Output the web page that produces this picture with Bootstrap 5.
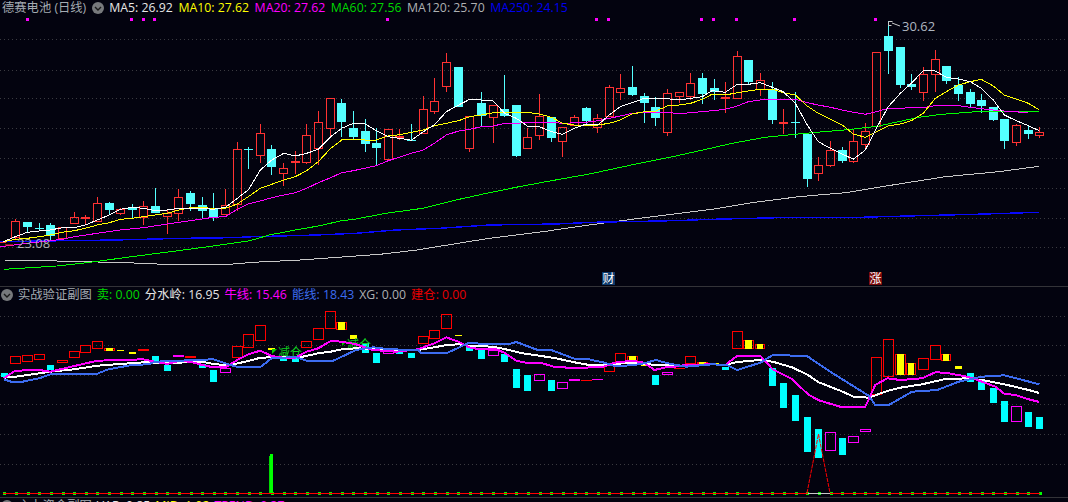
<!DOCTYPE html>
<html lang="zh-CN">
<head>
<meta charset="utf-8">
<title>德赛电池 (日线)</title>
<link href="https://cdn.jsdelivr.net/npm/bootstrap@5.3.0/dist/css/bootstrap.min.css" rel="stylesheet">
<style>
html,body{height:502px;overflow:hidden;background:#03030f}
.chart-shell{width:1068px;height:502px;background:#03030f;font-family:"Open Sans","Noto Sans CJK SC",sans-serif;font-size:12.3px;line-height:16px}
.legend-row{height:16px;gap:5.5px;white-space:nowrap;padding-left:2px;flex:none}
.legend-sub{padding-left:1px;gap:5px}
.legend-row svg{flex:none}
.pane-rule{height:1px;background:#333338;flex:none}
.chart-svg{display:block;flex:none}
.tone-title{color:#a4abb2}.tone-white{color:#e6e6e6}.tone-yellow{color:#ffff00}.tone-pink{color:#ff00ff}
.tone-green{color:#00d800}.tone-gray{color:#aeb0b2}.tone-blue{color:#0000f0}.tone-sky{color:#3c6cf0}.tone-red{color:#e80000}
.svg-label{font-family:"Open Sans","Noto Sans CJK SC",sans-serif}
</style>
</head>
<body class="m-0">
<div class="chart-shell d-flex flex-column">
  <div class="legend-row d-flex align-items-center position-relative">
    <span class="tone-title">德赛电池 (日线)</span>
    <svg width="12" height="12" viewBox="0 0 12 12"><circle cx="6" cy="6" r="6" fill="#77797c"/><path d="M3 5l3 3 3-3" fill="none" stroke="#1a1a1a" stroke-width="1.4"/></svg>
    <span class="tone-white">MA5: 26.92</span>
    <span class="tone-yellow">MA10: 27.62</span>
    <span class="tone-pink">MA20: 27.62</span>
    <span class="tone-green">MA60: 27.56</span>
    <span class="tone-gray">MA120: 25.70</span>
    <span class="tone-blue">MA250: 24.15</span>
  </div>
  <svg id="mainChart" class="chart-svg" width="1068" height="270" viewBox="0 16 1068 270"></svg>
  <div class="pane-rule"></div>
  <div class="legend-row legend-sub d-flex align-items-center">
    <svg width="12" height="12" viewBox="0 0 12 12"><circle cx="6" cy="6" r="6" fill="#77797c"/><path d="M3 5l3 3 3-3" fill="none" stroke="#1a1a1a" stroke-width="1.4"/></svg>
    <span class="tone-title">实战验证副图</span>
    <span class="tone-green">卖: 0.00</span>
    <span class="tone-white">分水岭: 16.95</span>
    <span class="tone-pink">牛线: 15.46</span>
    <span class="tone-sky">能线: 18.43</span>
    <span class="tone-gray">XG: 0.00</span>
    <span class="tone-red">建仓: 0.00</span>
  </div>
  <svg id="subChart" class="chart-svg" width="1068" height="194" viewBox="0 303 1068 194"></svg>
  <div class="pane-rule"></div>
  <div class="legend-row legend-sub d-flex align-items-center">
    <svg width="12" height="12" viewBox="0 0 12 12"><circle cx="6" cy="6" r="6" fill="#77797c"/></svg>
    <span class="tone-title">主力资金副图</span>
    <span class="tone-white">VAR: 0.85</span>
    <span class="tone-yellow">MID: 1.02</span>
    <span class="tone-pink">TREND: 0.37</span>
  </div>
</div>
<script>
var CY='#54ffff',RD='#ff3232';
// [cx, top, bottom, high, low, kind]  kind: r=hollow red, c=solid cyan
var K=[[15.5,221,237,219,239,'r'],[27.5,222,227,222,232,'c'],[39.5,228,228,223,231,'c'],[50.5,225,236,223,240,'c'],[62.5,227,238,227,240,'r'],[74.5,217,223,212,223,'r'],[85.5,217,219,215,224,'R'],[97.5,203,221,197,222,'r'],[109.5,203,210,202,215,'c'],[120.5,209,213,208,215,'r'],[132.5,207,210,204,218,'c'],[143.5,206,217,201,225,'r'],[155.5,206,213,188,213,'c'],[167.5,213,216,209,234,'r'],[178.5,197,213,189,221,'r'],[190.5,193,204,191,211,'c'],[202.5,205,211,197,218,'c'],[213.5,209,217,193,221,'c'],[225.5,205,214,189,215,'r'],[237.5,149,204,142,211,'r'],[248.5,149,149,147,169,'c'],[260.5,133,155,124,163,'r'],[271.5,149,167,145,175,'c'],[283.5,168,173,163,186,'r'],[295.5,161,163,151,174,'R'],[306.5,135,162,124,164,'r'],[318.5,122,148,111,165,'r'],[330.5,98,128,98,137,'r'],[341.5,103,122,99,137,'c'],[353.5,128,137,111,140,'c'],[365.5,131,144,119,152,'c'],[376.5,143,148,128,165,'c'],[388.5,129,159,129,161,'r'],[399.5,136,138,129,140,'R'],[411.5,140,140,124,141,'c'],[423.5,109,133,96,133,'r'],[434.5,101,111,78,114,'r'],[446.5,62,86,53,92,'r'],[458.5,67,107,67,107,'c'],[469.5,116,148,116,152,'r'],[481.5,103,116,92,127,'c'],[493.5,105,117,105,143,'r'],[504.5,109,116,75,117,'c'],[516.5,105,156,105,157,'c'],[527.5,137,148,128,148,'r'],[539.5,116,135,94,140,'r'],[551.5,117,138,117,142,'c'],[562.5,127,141,127,157,'r'],[574.5,117,125,115,125,'r'],[586.5,108,121,107,124,'c'],[597.5,118,127,114,133,'r'],[609.5,87,116,85,116,'r'],[620.5,88,92,74,100,'r'],[632.5,87,95,66,96,'c'],[644.5,96,103,93,123,'c'],[655.5,107,118,97,126,'c'],[667.5,93,132,89,136,'r'],[679.5,92,96,92,103,'r'],[690.5,83,96,73,100,'r'],[702.5,78,94,73,104,'c'],[714.5,88,92,79,100,'c'],[725.5,97,99,82,113,'R'],[737.5,56,98,51,99,'r'],[748.5,60,82,60,84,'c'],[760.5,80,89,73,96,'r'],[772.5,89,120,82,124,'c'],[783.5,122,124,109,134,'R'],[795.5,122,122,92,138,'c'],[807.5,134,179,134,187,'c'],[818.5,165,173,157,181,'r'],[830.5,150,165,141,167,'r'],[842.5,150,161,147,163,'c'],[853.5,141,161,130,163,'r'],[865.5,131,144,123,149,'r'],[876.5,52,126,52,126,'r'],[888.5,36,51,21,74,'c'],[900.5,47,85,47,88,'c'],[911.5,84,87,74,90,'c'],[923.5,74,92,67,101,'r'],[935.5,59,74,50,92,'r'],[946.5,66,81,66,84,'c'],[958.5,85,94,77,101,'c'],[970.5,92,104,89,107,'c'],[981.5,100,106,94,113,'c'],[993.5,107,120,107,121,'c'],[1004.5,119,141,119,149,'c'],[1016.5,125,142,124,146,'r'],[1028.5,130,134,126,139,'c'],[1039.5,132,135,127,138,'r']];
function P(ox,oy,a){var o=[];for(var i=0;i<a.length;i+=2)o.push((ox+a[i]/3).toFixed(1)+','+(oy+a[i+1]/3).toFixed(1));return o.join(' ')}
var MA={
w:[P(0,0,[10,725,46,710,82,697,118,693,151,690,187,683,223,683,256,675,292,660,328,645,361,628,397,622,430,625,466,632,502,630,536,625,571,625,607,625,640,628,676,622,712,595,745,570,781,510,815,480,851,460,886,468,920,460,955,448,992,410,1025,385,1060,370]),P(356,0,[28,372,61,392,97,410,130,415,166,421,202,395,235,375,271,335,308,315,341,298,376,300,412,303,446,340,481,355,514,378,550,380,586,395,620,403,655,385,691,372,725,375,760,345,793,320,829,308,865,295,899,296,934,296,970,300,1004,295,1039,290]),P(712,0,[0,272,40,277,76,253,109,253,145,248,181,262,214,275,250,310,286,375,319,425,355,445,391,462,424,478,460,450,493,385,529,320,565,280,598,250,634,212,670,213,703,232,739,237,775,245,808,265,844,300,877,345,913,362,949,377,982,392])].join(' '),
y:[P(0,0,[10,725,46,718,82,715,118,710,151,705,187,697,223,692,256,685,292,675,328,668,361,658,397,655,430,650,466,645,502,640,536,630,571,623,607,623,640,625,676,625,712,612,745,590,781,565,815,553,851,540,886,530,920,512,955,485,992,445,1025,420,1060,417]),P(356,0,[28,420,61,420,97,408,130,404,166,397,202,390,235,377,271,370,308,362,341,350,376,345,412,338,446,338,481,338,514,337,550,342,586,352,620,370,655,375,691,375,725,375,760,370,793,360,829,342,865,335,899,333,934,318,970,315,1004,310,1039,298]),P(712,0,[0,283,40,285,76,278,109,273,145,268,181,268,214,278,250,285,286,318,319,340,355,357,391,375,424,402,460,412,493,395,529,378,565,372,598,362,634,340,670,295,703,275,739,255,775,245,808,238,844,258,877,285,913,297,949,310,982,330])].join(' '),
m:[P(0,0,[0,740,82,730,187,718,223,710,292,700,361,690,430,683,502,672,571,662,640,652,676,650,712,628,745,612,781,603,815,593,851,585,886,578,920,565,955,548,992,533,1025,518,1060,512]),P(356,0,[61,497,97,482,166,460,202,450,235,430,271,405,308,393,341,388,376,380,412,378,446,370,481,370,514,367,586,367,620,370,691,367,725,362,760,355,793,348,829,340,865,337,899,337,934,337,970,341,1004,338]),P(712,0,[0,332,40,328,76,318,109,305,145,300,250,298,286,308,319,315,355,322,391,330,424,337,460,343,493,335,529,325,634,323,670,317,739,317,775,322,808,326,844,330,877,333,949,338])].join(' '),
g:[P(0,250,[12,58,170,48,270,37,395,20,550,0]),P(0,0,[640,738,750,722,808,705,886,690,955,678,1025,662]),P(356,0,[0,657,90,640,200,625,300,600,400,578,480,562,570,545,700,522,850,490,950,470,1050,448]),P(712,0,[60,430,160,412,280,400,420,388,500,378,620,352,690,343,780,336,870,334,982,334])].join(' '),
a:[P(0,250,[12,30,170,33,380,38,490,43,690,43,760,37,900,30,1068,18,1140,13,1250,0]),P(356,0,[400,715,560,695,700,675,850,655,1068,628]),P(712,0,[120,608,260,590,400,578,560,552,700,530,860,515,982,499])].join(' '),
b:[P(0,0,[0,725,190,722,345,720,550,715,695,713,760,710,950,705,1068,700]),P(356,0,[120,690,250,685,400,675,600,672,710,667,950,662,1068,658]),P(712,0,[200,653,400,653,620,647,790,643,982,637])].join(' ')};
var h='';
[39,70,98,128,158,188,218,247].forEach(function(y){h+='<line x1="0" x2="1068" y1="'+(y+.5)+'" y2="'+(y+.5)+'" stroke="#3a3a40" stroke-dasharray="1 3"/>'});
[27,131,143,154,387,596,608,701,713,736,794,875].forEach(function(x){h+='<rect x="'+(x-1)+'" y="18" width="3" height="3" fill="#ff00ff"/>'});
K.forEach(function(k){var x=k[0],t=k[1],b=k[2],hi=k[3],lo=k[4],c=k[5],col=c=='c'?CY:RD;
 var X=Math.floor(x)+.5;
 h+='<line x1="'+X+'" x2="'+X+'" y1="'+hi+'" y2="'+t+'" stroke="'+col+'"/><line x1="'+X+'" x2="'+X+'" y1="'+b+'" y2="'+lo+'" stroke="'+col+'"/>';
 if(c=='c'){h+='<rect x="'+(X-4.5)+'" y="'+t+'" width="9" height="'+Math.max(1,b-t)+'" fill="'+CY+'"/>'}
 else if(c=='R'){h+='<rect x="'+(X-4.5)+'" y="'+t+'" width="9" height="'+(b-t)+'" fill="'+RD+'"/>'}
 else{h+='<rect x="'+(X-4)+'" y="'+(t+.5)+'" width="8" height="'+(b-t)+'" fill="none" stroke="'+RD+'"/>'}
});
function L(p,c,w){return '<polyline fill="none" shape-rendering="crispEdges" points="'+p+'" stroke="'+c+'" stroke-width="'+(w||1)+'"/>'}
h+=L(MA.a,'#c8c8c8')+L(MA.b,'#0808ff',1.4)+L(MA.g,'#00ff00')+L(MA.m,'#ff00ff')+L(MA.y,'#ffff00')+L(MA.w,'#ffffff');
h+='<path d="M888.5 21.5h4M888.5 21.5v4h3M892 23l8 3" fill="none" stroke="#c8c8c8"/>';
h+='<text class="svg-label" x="902" y="31" font-size="13" fill="#aeb6c0">30.62</text>';
h+='<rect x="0" y="242" width="6" height="1" fill="#ff3232"/><path d="M5 245h8" stroke="#ff3232"/>';
h+='<text class="svg-label" x="17" y="248" font-size="13" fill="#aeb0b2">23.08</text>';
h+='<path d="M1053.5 3.5l5 5-5 5-5-5z" fill="none" stroke="#6f6f74"/><path d="M1068 3.5h-2v10h2" fill="none" stroke="#6f6f74"/>';
h+='<rect x="602" y="272" width="13" height="13" fill="#0c3a6c"/><text class="svg-label" x="602.5" y="283" font-size="12" fill="#fff">财</text>';
h+='<rect x="869" y="272" width="13" height="13" fill="#7a0a0a"/><text class="svg-label" x="869.5" y="283" font-size="12" fill="#fff">涨</text>';
document.getElementById('mainChart').innerHTML=h;

var s='';
[316,345,375,404,434,464].forEach(function(y){s+='<line x1="0" x2="1068" y1="'+(y+.5)+'" y2="'+(y+.5)+'" stroke="#3a3a40" stroke-dasharray="1 3"/>'});
var RED='#ff0000',MG='#ff00ff',YE='#ffff00',AQ='#00ffff';
var B=[[1,8,373,377,'c'],[10,21,356,364,'o'],[22,33,355,362,'o'],[34,45,354,360,'o'],[47,54,365,370,'c'],[57,68,360,363,'o'],[69,80,351,358,'o'],[80,91,345,353,'o'],[92,103,341,349,'o'],[104,115,348,351,'h'],[117,124,350,351,'y'],[129,136,352,354,'y'],[138,149,349,351,'s'],[152,159,356,361,'c'],[164,171,365,371,'c'],[173,184,355,357,'m'],[185,196,356,358,'s'],[199,206,364,368,'c'],[210,217,370,382,'c'],[220,231,368,373,'p'],[232,243,346,358,'o'],[243,254,334,348,'o'],[255,266,325,341,'o'],[268,275,348,350,'y'],[280,287,358,361,'c'],[292,299,358,362,'c'],[301,312,341,348,'o'],[313,324,328,340,'o'],[325,336,311,329,'o'],[336,347,322,330,'h'],[350,357,335,339,'y'],[362,369,343,353,'c'],[373,380,353,363,'c'],[383,394,350,354,'p'],[396,403,352,354,'c'],[408,415,353,358,'c'],[418,429,336,344,'o'],[429,440,330,339,'o'],[441,452,314,329,'o'],[455,462,335,336,'y'],[466,473,346,351,'c'],[478,485,350,359,'c'],[488,499,350,356,'p'],[501,508,354,362,'c'],[513,520,369,388,'c'],[524,531,375,391,'c'],[534,545,374,381,'p'],[548,555,380,391,'c'],[557,568,382,389,'p'],[569,580,379,381,'m'],[581,592,380,381,'s'],[592,603,379,380,'m'],[604,615,363,372,'o'],[615,626,353,363,'o'],[627,638,356,363,'h'],[641,646,365,366,'y'],[652,659,375,385,'c'],[662,673,372,375,'p'],[674,685,368,369,'s'],[685,696,356,364,'o'],[697,708,362,364,'h'],[712,719,363,364,'y'],[722,729,367,370,'c'],[732,743,331,349,'o'],[743,754,340,349,'h'],[755,765,344,349,'h'],[769,776,368,386,'c'],[780,787,383,408,'c'],[792,799,395,421,'c'],[804,811,417,452,'c'],[815,822,429,458,'c'],[825,836,432,451,'p'],[839,846,438,455,'c'],[848,859,436,443,'p'],[860,871,429,432,'p'],[871,882,357,395,'o'],[883,894,339,377,'o'],[895,906,354,375,'h'],[906,916,363,375,'h'],[918,929,358,370,'o'],[930,941,345,360,'o'],[941,951,354,361,'h'],[955,962,366,369,'y'],[967,974,373,382,'c'],[978,985,380,390,'c'],[990,997,388,403,'c'],[1001,1008,401,422,'c'],[1011,1022,406,422,'p'],[1025,1032,412,427,'c'],[1036,1043,417,429,'c']];
B.forEach(function(b){var x=b[0],X=b[1],t=b[2],e=b[3],k=b[4],w=X-x,H=e-t;
 function f(c,a,d,g,i){return '<rect x="'+a+'" y="'+d+'" width="'+g+'" height="'+i+'" fill="'+c+'"/>'}
 function o(c){return '<rect x="'+(x+.5)+'" y="'+(t+.5)+'" width="'+(w-1)+'" height="'+Math.max(1,H-1)+'" fill="none" stroke="'+c+'"/>'}
 if(k=='c')s+=f(AQ,x,t,w,H);
 else if(k=='o')s+=o(RED);
 else if(k=='p')s+=o(MG);
 else if(k=='s')s+=f(RED,x,t,w,Math.max(H,1));
 else if(k=='m')s+=f(MG,x,t,w,Math.max(H,1));
 else if(k=='y')s+=f(YE,x,t,w,Math.max(H,1));
 else if(k=='h')s+=o(RED)+f(YE,x+2,t,w-4,H);
});
s+='<path d="M272 349h5l-5 5z" fill="#00d000"/><text class="svg-label" x="278" y="357" font-size="12" fill="#10d020">减仓</text>';
s+='<path d="M342 341h5l-5 5z" fill="#00d000"/><text class="svg-label" x="347" y="349" font-size="12" fill="#10d020">减仓</text>';
var lm=[P(0,250,[12,385,46,362,118,360,151,365,223,348,292,332,361,330,430,328,466,335,502,342,536,333,571,335,607,345,640,352,676,352,712,330,745,313,781,302,815,318,851,323,886,323,920,305,955,295,992,273,1025,275,1068,283]),P(356,250,[51,300,120,305,185,298,235,280,271,262,307,275,340,292,366,297,420,297,445,308,481,332,514,339,556,339,600,352,655,353,738,352,775,338,829,332,865,338,895,360,930,352,955,350,990,345,1068,343]),P(712,250,[40,345,76,317,145,317,182,358,240,387,288,433,320,451,385,470,460,470,490,405,526,385,565,390,630,385,670,367,700,368,770,381,810,395,850,410,877,431,910,435,950,448,982,456])].join(' ');
var lw=[P(0,250,[12,383,46,380,118,370,151,365,223,358,292,347,361,342,430,337,466,338,536,338,571,336,607,335,640,342,676,345,700,343,745,333,781,323,815,322,851,320,900,322,955,310,992,305,1025,298,1068,295]),P(356,250,[51,297,120,300,185,300,235,292,271,285,307,283,340,287,410,290,445,297,500,310,556,318,600,325,655,337,700,345,738,345,775,342,829,338,900,345,990,347,1068,343]),P(712,250,[40,345,76,336,145,330,182,335,240,352,288,375,320,397,385,422,425,440,470,443,526,423,565,413,630,403,700,387,770,385,810,390,877,403,950,420,982,429])].join(' ');
var lb=[P(0,250,[12,388,36,396,63,396,118,385,151,373,292,371,325,358,395,345,445,343,466,335,640,328,676,340,712,351,781,351,815,325,886,321,920,332,1000,332,1068,300]),P(356,250,[51,292,100,298,185,300,195,308,275,308,340,278,380,282,460,282,481,276,545,300,585,300,655,326,690,326,745,338,775,348,830,346,865,340,900,330,935,340,990,350,1068,343]),P(712,250,[45,345,76,360,145,338,182,315,285,318,350,362,470,437,490,465,530,465,600,425,676,420,740,395,810,380,877,376,982,403])].join(' ');
s+=L(lw,'#ffffff',2)+L(lm,'#ff00ff',2)+L(lb,'#3c6cf0',2);
s+='<rect x="269" y="456" width="1" height="37" fill="#00d800"/><rect x="270" y="454" width="3" height="39" fill="#00ff00"/>';
var g='';for(var i=-1;i<89;i++){var x=i<0?3:Math.floor(15.5+i*11.636);g+='<rect x="'+x+'" y="492" width="3" height="3" fill="#00ff00"/>'}
s+=g;
s+='<line x1="3" x2="1040" y1="493.5" y2="493.5" stroke="#ff0000"/><line x1="808" x2="830" y1="493.5" y2="493.5" stroke="#c8c8c8"/>';
s+='<path d="M807 493L818.5 434L830 493" fill="none" stroke="#ff0000" stroke-dasharray="4 1"/>';
document.getElementById('subChart').innerHTML=s;
</script>
<script src="https://cdn.jsdelivr.net/npm/bootstrap@5.3.0/dist/js/bootstrap.bundle.min.js"></script>
</body>
</html>
